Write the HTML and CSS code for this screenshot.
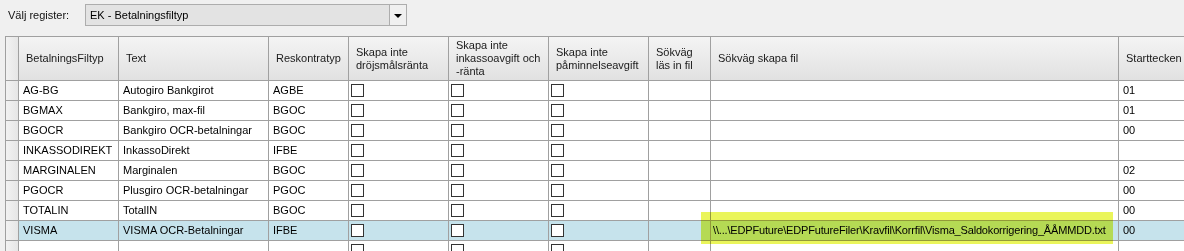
FILE: index.html
```html
<!DOCTYPE html>
<html lang="sv">
<head>
  <meta charset="UTF-8" />
  <title>Välj register</title>
  <link rel="stylesheet" href="styles.css">
</head>
<body>

<div class="toolbar">
  <label class="toolbar-label">Välj register:</label>
  <div class="combo">
    <div class="combo-value">EK - Betalningsfiltyp</div>
    <div class="combo-btn"><span class="arrow"></span></div>
  </div>
</div>

<div class="grid-wrap">
  <div class="grid">
    <!-- rubrikrad -->
    <div class="hcell rowhead"></div>
    <div class="hcell">BetalningsFiltyp</div>
    <div class="hcell">Text</div>
    <div class="hcell">Reskontratyp</div>
    <div class="hcell">Skapa inte<br>dröjsmålsränta</div>
    <div class="hcell">Skapa inte<br>inkassoavgift och<br>-ränta</div>
    <div class="hcell">Skapa inte<br>påminnelseavgift</div>
    <div class="hcell">Sökväg<br>läs in fil</div>
    <div class="hcell">Sökväg skapa fil</div>
    <div class="hcell">Starttecken</div>

    <div class="cell rowhead"></div>
    <div class="cell">AG-BG</div>
    <div class="cell">Autogiro Bankgirot</div>
    <div class="cell">AGBE</div>
    <div class="cell"><span class="check"></span></div>
    <div class="cell"><span class="check"></span></div>
    <div class="cell"><span class="check"></span></div>
    <div class="cell"></div>
    <div class="cell"></div>
    <div class="cell">01</div>

    <div class="cell rowhead"></div>
    <div class="cell">BGMAX</div>
    <div class="cell">Bankgiro, max-fil</div>
    <div class="cell">BGOC</div>
    <div class="cell"><span class="check"></span></div>
    <div class="cell"><span class="check"></span></div>
    <div class="cell"><span class="check"></span></div>
    <div class="cell"></div>
    <div class="cell"></div>
    <div class="cell">01</div>

    <div class="cell rowhead"></div>
    <div class="cell">BGOCR</div>
    <div class="cell">Bankgiro OCR-betalningar</div>
    <div class="cell">BGOC</div>
    <div class="cell"><span class="check"></span></div>
    <div class="cell"><span class="check"></span></div>
    <div class="cell"><span class="check"></span></div>
    <div class="cell"></div>
    <div class="cell"></div>
    <div class="cell">00</div>

    <div class="cell rowhead"></div>
    <div class="cell">INKASSODIREKT</div>
    <div class="cell">InkassoDirekt</div>
    <div class="cell">IFBE</div>
    <div class="cell"><span class="check"></span></div>
    <div class="cell"><span class="check"></span></div>
    <div class="cell"><span class="check"></span></div>
    <div class="cell"></div>
    <div class="cell"></div>
    <div class="cell"></div>

    <div class="cell rowhead"></div>
    <div class="cell">MARGINALEN</div>
    <div class="cell">Marginalen</div>
    <div class="cell">BGOC</div>
    <div class="cell"><span class="check"></span></div>
    <div class="cell"><span class="check"></span></div>
    <div class="cell"><span class="check"></span></div>
    <div class="cell"></div>
    <div class="cell"></div>
    <div class="cell">02</div>

    <div class="cell rowhead"></div>
    <div class="cell">PGOCR</div>
    <div class="cell">Plusgiro OCR-betalningar</div>
    <div class="cell">PGOC</div>
    <div class="cell"><span class="check"></span></div>
    <div class="cell"><span class="check"></span></div>
    <div class="cell"><span class="check"></span></div>
    <div class="cell"></div>
    <div class="cell"></div>
    <div class="cell">00</div>

    <div class="cell rowhead"></div>
    <div class="cell">TOTALIN</div>
    <div class="cell">TotalIN</div>
    <div class="cell">BGOC</div>
    <div class="cell"><span class="check"></span></div>
    <div class="cell"><span class="check"></span></div>
    <div class="cell"><span class="check"></span></div>
    <div class="cell"></div>
    <div class="cell"></div>
    <div class="cell">00</div>

    <!-- markerad rad -->
    <div class="cell rowhead"></div>
    <div class="cell selected">VISMA</div>
    <div class="cell selected">VISMA OCR-Betalningar</div>
    <div class="cell selected">IFBE</div>
    <div class="cell selected"><span class="check"></span></div>
    <div class="cell selected"><span class="check"></span></div>
    <div class="cell selected"><span class="check"></span></div>
    <div class="cell selected"></div>
    <div class="cell selected path">\\...\EDPFuture\EDPFutureFiler\Kravfil\Korrfil\Visma_Saldokorrigering_ÅÅMMDD.txt</div>
    <div class="cell selected">00</div>

    <div class="cell rowhead"></div>
    <div class="cell"></div>
    <div class="cell"></div>
    <div class="cell"></div>
    <div class="cell"><span class="check"></span></div>
    <div class="cell"><span class="check"></span></div>
    <div class="cell"><span class="check"></span></div>
    <div class="cell"></div>
    <div class="cell"></div>
    <div class="cell"></div>
  </div>

  <!-- överstrykning -->
  <div class="marker"></div>
</div>

</body>
</html>
```

FILE: styles.css
```css
body {
  margin: 0;
  background: #f0f0f0;
  color: #000;
  font-family: "Liberation Sans", Arial, sans-serif;
  font-size: 11px;
  overflow: hidden;
}
.toolbar {
  display: flex;
  align-items: center;
  padding: 4px 0 0 8px;
  height: 22px;
}
.toolbar-label {
  width: 77px;
  color: #111;
}
.combo {
  display: flex;
  width: 322px;
  height: 22px;
  box-sizing: border-box;
  border: 1px solid #adadad;
}
.combo-value {
  flex: 1;
  background: #e3e3e3;
  border-right: 1px solid #adadad;
  padding-left: 4px;
  line-height: 20px;
}
.combo-btn {
  width: 16px;
  display: flex;
  align-items: center;
  justify-content: center;
}
.arrow {
  width: 0;
  height: 0;
  border-left: 4px solid transparent;
  border-right: 4px solid transparent;
  border-top: 4px solid #000;
  margin-top: 1px;
}
.grid-wrap {
  position: relative;
  margin: 10px 0 0 5px;
}
.grid {
  display: grid;
  grid-template-columns: 13px 100px 150px 80px 100px 100px 100px 62px 408px 90px;
  width: max-content;
  border-left: 1px solid #a0a0a0;
  border-top: 1px solid #a0a0a0;
}
.hcell, .cell {
  box-sizing: border-box;
  border-right: 1px solid #a0a0a0;
  border-bottom: 1px solid #a0a0a0;
  white-space: nowrap;
  overflow: hidden;
}
.hcell {
  height: 44px;
  display: flex;
  align-items: center;
  padding-left: 7px;
  line-height: 13px;
  color: #1a1a1a;
  background: linear-gradient(#f4f4f4, #e1e1e1);
}
.cell {
  height: 20px;
  line-height: 19px;
  padding-left: 4px;
  background: #fff;
}
.cell.path {
  padding-left: 2px;
  letter-spacing: -0.17px;
}
.hcell.rowhead, .cell.rowhead {
  padding: 0;
  background: linear-gradient(90deg, #f2f2f2, #e6e6e6);
}
.cell.selected {
  background: #c6e3ec;
}
.check {
  display: block;
  width: 13px;
  height: 13px;
  box-sizing: border-box;
  border: 1px solid #333;
  background: #fff;
  margin: 3px 0 0 -2px;
}
.marker {
  position: absolute;
  left: 696px;
  top: 176px;
  width: 412px;
  height: 32px;
  background: #eaf55b;
  mix-blend-mode: multiply;
}
```
